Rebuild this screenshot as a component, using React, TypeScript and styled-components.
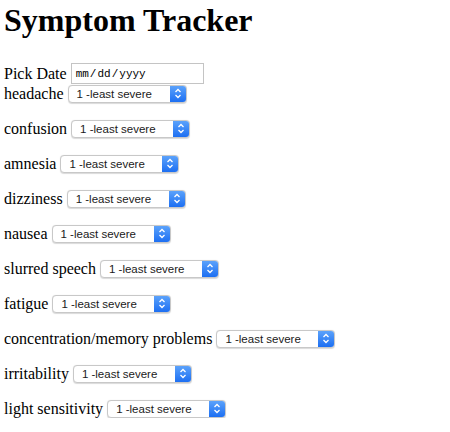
import React from "react";
import styled, { createGlobalStyle } from "styled-components";

const Global = createGlobalStyle`
  html, body { margin: 0; padding: 0; background: #fff; }
  body { font-family: "Liberation Serif", "Times New Roman", serif; color: #000; }
`;

const Page = styled.div`
  padding: 0 4px;
  display: flex;
  flex-direction: column;
`;

const Title = styled.h1`
  font-size: 32px;
  font-weight: bold;
  margin: 2px 0 0;
  line-height: 37px;
`;

const DateRow = styled.div`
  display: flex;
  align-items: center;
  gap: 4px;
  height: 21px;
  margin-top: 24px;
  font-size: 16px;
`;

const Row = styled.div<{ $first?: boolean }>`
  display: flex;
  align-items: center;
  gap: 4px;
  height: 19px;
  margin-top: ${(p) => (p.$first ? "0px" : "16px")};
  font-size: 16px;
`;

const Label = styled.span`
  white-space: nowrap;
  line-height: 19px;
`;

const DateBox = styled.div`
  width: 133px;
  height: 21px;
  box-sizing: border-box;
  border: 1px solid #c4c4c4;
  display: flex;
  align-items: center;
  padding-left: 4px;
  font-family: "Liberation Mono", "Courier New", monospace;
  font-size: 11px;
  color: #000;
  background: #fff;
`;

const Sep = styled.span`
  margin: 0 1px;
`;

const SelectBox = styled.div`
  position: relative;
  width: 119px;
  height: 18px;
  box-sizing: border-box;
  border: 1px solid #c8c8c8;
  border-radius: 4px;
  background: #fff;
  display: flex;
  align-items: center;
  box-shadow: 0 0.5px 1px rgba(0, 0, 0, 0.15);
  overflow: hidden;
`;

const SelectText = styled.span`
  font-family: "Liberation Sans", Arial, sans-serif;
  font-size: 11.5px;
  padding-left: 8px;
  flex: 1;
  color: #1a1a1a;
  white-space: nowrap;
`;

const Arrow = styled.span`
  width: 16px;
  height: 100%;
  background: linear-gradient(#5ba2fb, #1d6ff2);
  display: flex;
  align-items: center;
  justify-content: center;
`;

const symptoms = [
  "headache",
  "confusion",
  "amnesia",
  "dizziness",
  "nausea",
  "slurred speech",
  "fatigue",
  "concentration/memory problems",
  "irritability",
  "light sensitivity",
];

const Chevrons = () => (
  <svg width="8" height="11" viewBox="0 0 8 11">
    <path d="M1.5 4 L4 1.5 L6.5 4" fill="none" stroke="#fff" strokeWidth="1.3" />
    <path d="M1.5 7 L4 9.5 L6.5 7" fill="none" stroke="#fff" strokeWidth="1.3" />
  </svg>
);

export default function App() {
  return (
    <Page>
      <Global />
      <Title>Symptom Tracker</Title>
      <DateRow>
        <Label>Pick Date</Label>
        <DateBox>
          mm<Sep>/</Sep>dd<Sep>/</Sep>yyyy
        </DateBox>
      </DateRow>
      {symptoms.map((s, i) => (
        <Row key={s} $first={i === 0}>
          <Label>{s}</Label>
          <SelectBox>
            <SelectText>1 -least severe</SelectText>
            <Arrow>
              <Chevrons />
            </Arrow>
          </SelectBox>
        </Row>
      ))}
    </Page>
  );
}
